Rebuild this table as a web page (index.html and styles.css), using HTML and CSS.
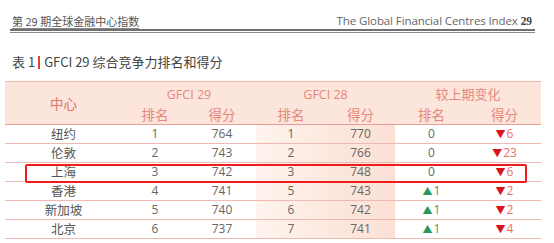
FILE: index.html
```html
<!DOCTYPE html>
<html lang="zh">
<head>
<meta charset="utf-8">
<link rel="stylesheet" href="styles.css">
</head>
<body>
<div class="top">
  <span class="top-left">第 29 期全球金融中心指数</span>
  <span class="top-right">The Global Financial Centres Index <b>29</b></span>
</div>
<div class="rule"></div>
<div class="caption">表 1<span class="bar"></span>GFCI 29 综合竞争力排名和得分</div>
<div class="table-wrap">
  <table class="rank">
    <colgroup>
      <col class="c-city"><col class="c1"><col class="c2"><col class="c3"><col class="c4"><col class="c5"><col class="c6">
    </colgroup>
    <thead>
      <tr class="h1">
        <th rowspan="2" class="city-h">中心</th>
        <th colspan="2" class="grp">GFCI 29</th>
        <th colspan="2" class="grp">GFCI 28</th>
        <th colspan="2">较上期变化</th>
      </tr>
      <tr class="h2">
        <th>排名</th><th>得分</th><th>排名</th><th>得分</th><th>排名</th><th>得分</th>
      </tr>
    </thead>
    <tbody>
      <tr><td>纽约</td><td>1</td><td>764</td><td class="sh l">1</td><td class="sh r">770</td><td>0</td><td><span class="dn">▼</span><span class="dv">6</span></td></tr>
      <tr><td>伦敦</td><td>2</td><td>743</td><td class="sh l">2</td><td class="sh r">766</td><td>0</td><td><span class="dn">▼</span><span class="dv">23</span></td></tr>
      <tr><td>上海</td><td>3</td><td>742</td><td class="sh l">3</td><td class="sh r">748</td><td>0</td><td><span class="dn">▼</span><span class="dv">6</span></td></tr>
      <tr><td>香港</td><td>4</td><td>741</td><td class="sh l">5</td><td class="sh r">743</td><td><span class="up">▲</span><span class="uv">1</span></td><td><span class="dn">▼</span><span class="dv">2</span></td></tr>
      <tr><td>新加坡</td><td>5</td><td>740</td><td class="sh l">6</td><td class="sh r">742</td><td><span class="up">▲</span><span class="uv">1</span></td><td><span class="dn">▼</span><span class="dv">2</span></td></tr>
      <tr><td>北京</td><td>6</td><td>737</td><td class="sh l">7</td><td class="sh r">741</td><td><span class="up">▲</span><span class="uv">1</span></td><td><span class="dn">▼</span><span class="dv">4</span></td></tr>
    </tbody>
  </table>
  <div class="highlight"></div>
</div>
</body>
</html>
```
FILE: styles.css
```css
html, body {
  margin: 0;
  padding: 0;
  background: #ffffff;
}
body {
  font-family: "Open Sans", "Noto Sans CJK SC", sans-serif;
  color: #555;
}
.top {
  margin: 0 19px 0 10px;
  padding: 14px 3px 1px 2px;
  display: flex;
  justify-content: space-between;
  align-items: flex-end;
  line-height: 14px;
  border-bottom: 2px solid #707070;
}
.top-left {
  font-family: "Noto Sans CJK SC", sans-serif;
  font-size: 11px;
  color: #555;
  text-decoration: underline;
  text-decoration-color: #888;
  text-underline-offset: 2px;
}
.top-right {
  font-size: 11.5px;
  color: #666;
  letter-spacing: -0.1px;
}
.top-right b {
  font-family: "Liberation Serif", serif;
  font-weight: bold;
  color: #444;
}
.rule {
  margin: 1px 19px 0 10px;
  height: 1px;
  background: #8a8a8a;
}
.caption {
  margin: 20px 0 0 12px;
  font-family: "Noto Sans CJK SC", sans-serif;
  font-size: 13px;
  line-height: 18px;
  color: #444;
  display: flex;
  align-items: center;
}
.bar {
  display: inline-block;
  width: 2px;
  height: 13px;
  background: #e0403a;
  margin: 0 4px 0 3px;
}
.table-wrap {
  position: relative;
  margin: 10px 0 0 5px;
  width: 536px;
}
.rank {
  width: 536px;
  border-collapse: collapse;
  table-layout: fixed;
  text-align: center;
}
.c-city { width: 117px; }
.c1 { width: 66px; }
.c2 { width: 68px; }
.c3 { width: 70px; }
.c4 { width: 69px; }
.c5 { width: 73px; }
.c6 { width: 73px; }
.rank thead tr {
  background: #fce5db;
}
.rank thead th {
  font-family: "Noto Sans CJK SC", sans-serif;
  font-weight: normal;
  color: #e6877d;
  padding: 0;
}
.h1 {
  border-top: 1px solid #f0b9b0;
}
.h1 th {
  height: 21px;
  font-size: 13px;
  vertical-align: bottom;
}
.h1 th.grp {
  font-family: "Open Sans", sans-serif;
  font-size: 12.5px;
}
.h1 th.city-h {
  vertical-align: middle;
  font-size: 13.5px;
  color: #e27468;
}
.h2 th {
  height: 21px;
  font-size: 13.5px;
}
.h2 {
  border-bottom: 1px solid #e99d94;
}
.rank tbody tr {
  border-bottom: 1px solid #efb8b2;
}
.rank tbody td {
  height: 18px;
  padding: 0;
  font-size: 12px;
  line-height: 18px;
  color: #666;
}
.rank tbody td:first-child {
  font-family: "Noto Sans CJK SC", sans-serif;
  font-size: 12.5px;
  color: #555;
}
.rank tbody td.sh {
  background: #fdebe2;
}
.rank tbody td.sh.l {
  background: linear-gradient(to right, #fef3ee, #fce9df);
}
.rank tbody td.sh.r {
  background: linear-gradient(to right, #fce9df, #fbe0d4);
}
.dn {
  color: #d9141c;
  font-size: 10px;
  margin-right: 1px;
}
.dv {
  color: #e6736b;
}
.up {
  color: #27965a;
  font-size: 10px;
  margin-right: 1px;
}
.uv {
  color: #3aa066;
}
.highlight {
  position: absolute;
  left: 20px;
  top: 83px;
  width: 498px;
  height: 15px;
  border: 2px solid #ee1c1c;
  border-radius: 2px;
  pointer-events: none;
}
```
